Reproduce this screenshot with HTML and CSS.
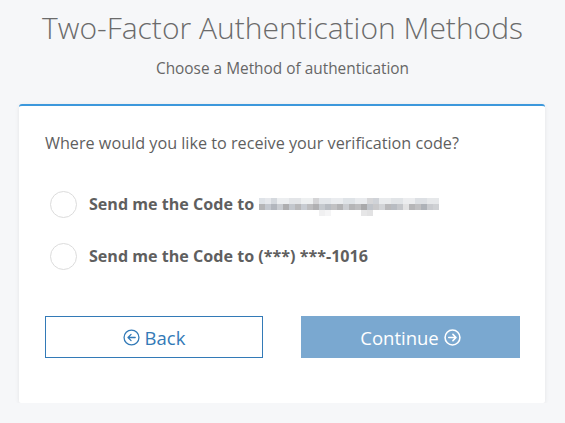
FILE: index.html
```html
<!DOCTYPE html>
<html>
<head>
<meta charset="utf-8">
<link rel="stylesheet" href="styles.css">
</head>
<body>
<header class="head">
  <h1 class="title">Two-Factor Authentication Methods</h1>
  <p class="subtitle">Choose a Method of authentication</p>
</header>
<main class="card">
  <p class="question">Where would you like to receive your verification code?</p>
  <ul class="options">
    <li class="option">
      <span class="radio"></span>
      <span class="label">Send me the Code to</span>
      <span class="blur">
        <span class="blur-row r1"></span>
        <span class="blur-row r2"></span>
        <span class="blur-row r3"></span>
      </span>
    </li>
    <li class="option">
      <span class="radio"></span>
      <span class="label">Send me the Code to (***) ***-1016</span>
    </li>
  </ul>
  <div class="actions">
    <button class="btn btn-back">
      <svg class="icon" viewBox="0 0 16 16" width="17" height="17"><circle cx="8" cy="8" r="7" fill="none" stroke="currentColor" stroke-width="1.2"/><path d="M11.5 8H4.8M7.6 5.1L4.7 8l2.9 2.9" fill="none" stroke="currentColor" stroke-width="1.2" stroke-linecap="round" stroke-linejoin="round"/></svg>
      <span>Back</span>
    </button>
    <button class="btn btn-continue" disabled>
      <span>Continue</span>
      <svg class="icon" viewBox="0 0 16 16" width="17" height="17"><circle cx="8" cy="8" r="7" fill="none" stroke="currentColor" stroke-width="1.5"/><path d="M4.5 8h6.7M8.4 5.1L11.3 8l-2.9 2.9" fill="none" stroke="currentColor" stroke-width="1.5" stroke-linecap="round" stroke-linejoin="round"/></svg>
    </button>
  </div>
</main>
</body>
</html>
```
FILE: styles.css
```css
* { box-sizing: border-box; }
html, body { margin: 0; padding: 0; }
body {
  background: #f6f7f9;
  font-family: "Open Sans", "Liberation Sans", sans-serif;
  color: #666;
}
.head { text-align: center; padding-top: 8px; }
.title {
  margin: 0;
  font-weight: 300;
  font-size: 30px;
  line-height: 40px;
  color: #6b6b6b;
}
.subtitle {
  margin: 11px 0 0;
  font-size: 15.4px;
  line-height: 20px;
  color: #666;
}
.card {
  margin: 25px 20px 0 19px;
  background: #fff;
  border-top: 2px solid #3c98dc;
  border-radius: 3px 3px 2px 2px;
  box-shadow: 0 1px 4px rgba(0,0,0,0.08);
  padding: 26px 25px 45px 26px;
}
.question {
  margin: 0;
  font-size: 16.2px;
  line-height: 22px;
  color: #5f5f5f;
}
.options {
  list-style: none;
  margin: 37px 0 0;
  padding: 0 0 0 5px;
}
.option {
  display: flex;
  align-items: center;
  height: 26px;
  margin-bottom: 26px;
}
.option:last-child { margin-bottom: 0; }
.radio {
  width: 27px;
  height: 27px;
  border-radius: 50%;
  border: 1.5px solid #dcdcdc;
  background: #fff;
  flex: none;
  margin-right: 12px;
}
.label {
  font-weight: 700;
  font-size: 16.1px;
  color: #5f5f5f;
}
.blur {
  display: inline-flex;
  flex-direction: column;
  margin-left: 5px;
  margin-top: 6px;
}
.blur-row { display: block; height: 6px; }
.r1 {
  width: 180px;
  background: linear-gradient(90deg,
    #dfe3e8 0 6px, #e6e8ec 6px 12px, #d5d9de 12px 18px, #eceef0 18px 30px, #e3e5e8 30px 42px,
    #eef0f1 42px 54px, #d4d4d6 54px 60px, #e3e6ea 60px 72px, #eaecef 72px 84px, #dfe3e7 84px 96px,
    #e9ebee 96px 108px, #d6d6d8 108px 114px, #d0d3d8 114px 120px, #e9ebed 120px 132px, #e1e4e7 132px 144px,
    #ecedef 144px 156px, #dde0e4 156px 168px, #e6e8ea 168px 180px);
}
.r2 {
  width: 180px;
  background: linear-gradient(90deg,
    #b5b5b7 0 6px, #c4c8cf 6px 12px, #b2b6bd 12px 18px, #c9ccd1 18px 24px, #aeaeb0 24px 30px,
    #c3c7cd 30px 36px, #b8b8ba 36px 42px, #c8ccd2 42px 48px, #bdbdbf 48px 54px, #b0b0b2 54px 60px,
    #c5c9ce 60px 66px, #b8bcc2 66px 72px, #c1c1c3 72px 78px, #b3b3b5 78px 84px, #cbcdd1 84px 90px,
    #b5b5b7 90px 96px, #bdbdbf 96px 102px, #a9a9ab 102px 108px, #c0c4ca 108px 114px, #c9c9cb 114px 120px,
    #d2d4d7 120px 126px, #b9b9bb 126px 132px, #b8bcc2 132px 138px, #c5c7cb 138px 144px, #e2e2e3 144px 150px,
    #b6b6b8 150px 156px, #c0c0c2 156px 162px, #aeb2b8 162px 168px, #c9cbcf 168px 174px, #cfd1d4 174px 180px);
}
.r3 {
  width: 120px;
  background: linear-gradient(90deg,
    transparent 0 60px, #f0f0f1 60px 66px, #f5f5f6 66px 72px, transparent 72px 102px, #e6e6e7 102px 108px, #e2e2e3 108px 114px, transparent 114px);
}
.actions {
  display: grid;
  grid-template-columns: 218px 219px;
  justify-content: space-between;
  margin-top: 47px;
}
.btn {
  height: 42px;
  display: flex;
  align-items: center;
  justify-content: center;
  gap: 5px;
  font-family: "Open Sans", "Liberation Sans", sans-serif;
  font-size: 18.5px;
  border-radius: 0;
  padding: 0;
}
.btn-back {
  background: #fff;
  border: 1px solid #337ab7;
  color: #337ab7;
}
.btn-continue {
  background: #7aa8d0;
  border: 1px solid #7aa8d0;
  color: #fff;
}
.icon { flex: none; }
```
